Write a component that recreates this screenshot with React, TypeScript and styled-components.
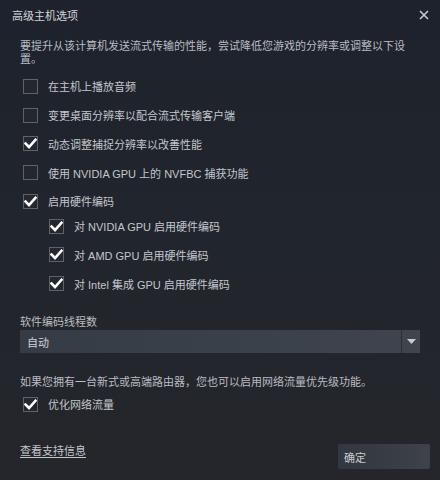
import React from "react";
import styled, { createGlobalStyle } from "styled-components";

const Global = createGlobalStyle`
  html, body { margin: 0; padding: 0; background: #1e222a; }
  * { box-sizing: border-box; }
  body { font-family: "Liberation Sans", Arial, "Noto Sans CJK SC", sans-serif; }
`;

const Dialog = styled.div`
  width: 440px;
  height: 480px;
  display: flex;
  flex-direction: column;
  background: linear-gradient(180deg, #1d222c 0%, #21252d 45%, #24262b 100%);
  color: #c3c7cc;
  font-size: 11px;
  overflow: hidden;
`;

const Header = styled.div`
  height: 30px;
  padding: 0 12px;
  display: flex;
  align-items: center;
  justify-content: space-between;
`;

const Title = styled.div`
  font-size: 11px;
  color: #d3d6da;
`;

const Close = styled.button`
  width: 16px;
  height: 16px;
  padding: 0;
  margin-right: -4px;
  border: none;
  background: none;
  display: flex;
  align-items: center;
  justify-content: center;
  cursor: pointer;
`;

const Body = styled.div`
  flex: 1;
  padding: 10px 20px 0 20px;
  display: flex;
  flex-direction: column;
`;

const Desc = styled.p`
  margin: 0;
  padding-right: 8px;
  line-height: 13px;
  color: #b9bdc2;
`;

const Options = styled.div`
  margin-top: 6px;
  display: flex;
  flex-direction: column;
`;

const Row = styled.label<{ $indent?: boolean }>`
  height: 28.75px;
  flex: none;
  display: flex;
  align-items: center;
  gap: 10px;
  padding-left: ${(p) => (p.$indent ? "29px" : "3px")};
  color: #c3c7cc;
  cursor: pointer;
`;

const SubGroup = styled.div`
  margin-top: -4px;
  display: flex;
  flex-direction: column;
`;

const Box = styled.span`
  width: 15px;
  height: 15px;
  flex: none;
  border: 1px solid #5e636b;
  background: #24272d;
  display: flex;
  align-items: center;
  justify-content: center;
`;

const FieldLabel = styled.div`
  margin-top: 18px;
  line-height: 13px;
  color: #b9bdc2;
`;

const Select = styled.div`
  margin-top: 1px;
  height: 23px;
  display: flex;
  align-items: center;
  background: linear-gradient(90deg, #363c46 0%, #3b414b 60%, #3f444d 100%);
`;

const SelectValue = styled.div`
  flex: 1;
  padding-left: 7px;
  color: #d0d3d7;
`;

const SelectArrow = styled.div`
  width: 19px;
  height: 100%;
  border-left: 1px solid #2a2e35;
  display: flex;
  align-items: center;
  justify-content: center;
`;

const Note = styled.p`
  margin: 23px 0 0;
  line-height: 13px;
  color: #b9bdc2;
`;

const NoteRow = styled(Row)`
  height: 22px;
  margin-top: 4px;
`;

const Footer = styled.div`
  margin-top: auto;
  padding: 0 10px 11px 20px;
  display: flex;
  align-items: flex-end;
  justify-content: space-between;
`;

const Link = styled.a`
  margin-bottom: 11px;
  color: #c3c7cc;
  text-decoration: underline;
  text-underline-offset: 2px;
  cursor: pointer;
`;

const Button = styled.button`
  width: 92px;
  height: 25px;
  padding: 0 6px;
  border: none;
  border-radius: 2px;
  text-align: left;
  font: inherit;
  font-size: 11px;
  color: #c9ccd0;
  background: linear-gradient(90deg, #33373f 0%, #393e47 70%, #3e434b 100%);
  cursor: pointer;
`;

const Check = () => (
  <svg width="13" height="11" viewBox="0 0 13 11">
    <path d="M1.5 5.5 L5 9 L11.5 1.8" fill="none" stroke="#ffffff" strokeWidth="2.6" strokeLinecap="square" />
  </svg>
);

const CheckBox = ({ checked }: { checked: boolean }) => <Box>{checked ? <Check /> : null}</Box>;

const Option = ({ checked, label, indent }: { checked: boolean; label: string; indent?: boolean }) => (
  <Row $indent={indent}>
    <CheckBox checked={checked} />
    <span>{label}</span>
  </Row>
);

export default function App() {
  return (
    <>
      <Global />
      <Dialog>
        <Header>
          <Title>高级主机选项</Title>
          <Close aria-label="关闭">
            <svg width="10" height="10" viewBox="0 0 10 10">
              <path d="M1 1 L9 9 M9 1 L1 9" stroke="#c8ccd0" strokeWidth="1.6" />
            </svg>
          </Close>
        </Header>
        <Body>
          <Desc>要提升从该计算机发送流式传输的性能，尝试降低您游戏的分辨率或调整以下设置。</Desc>
          <Options>
            <Option checked={false} label="在主机上播放音频" />
            <Option checked={false} label="变更桌面分辨率以配合流式传输客户端" />
            <Option checked label="动态调整捕捉分辨率以改善性能" />
            <Option checked={false} label="使用 NVIDIA GPU 上的 NVFBC 捕获功能" />
            <Option checked label="启用硬件编码" />
            <SubGroup>
              <Option checked indent label="对 NVIDIA GPU 启用硬件编码" />
              <Option checked indent label="对 AMD GPU 启用硬件编码" />
              <Option checked indent label="对 Intel 集成 GPU 启用硬件编码" />
            </SubGroup>
          </Options>
          <FieldLabel>软件编码线程数</FieldLabel>
          <Select>
            <SelectValue>自动</SelectValue>
            <SelectArrow>
              <svg width="9" height="5" viewBox="0 0 9 5">
                <path d="M0 0 H9 L4.5 5 Z" fill="#c8ccd0" />
              </svg>
            </SelectArrow>
          </Select>
          <Note>如果您拥有一台新式或高端路由器，您也可以启用网络流量优先级功能。</Note>
          <NoteRow>
            <CheckBox checked />
            <span>优化网络流量</span>
          </NoteRow>
        </Body>
        <Footer>
          <Link>查看支持信息</Link>
          <Button>确定</Button>
        </Footer>
      </Dialog>
    </>
  );
}
